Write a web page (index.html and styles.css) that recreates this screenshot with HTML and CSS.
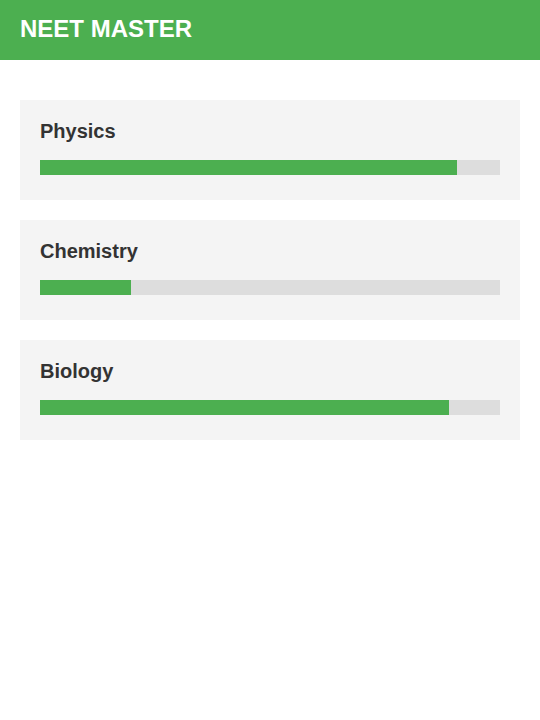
FILE: index.html
```html
<!DOCTYPE html>
<html>
<head>
<meta charset="utf-8">
<link rel="stylesheet" href="styles.css">
</head>
<body>
<header class="app-header">NEET MASTER</header>
<main class="subjects">
  <section class="card">
    <h2 class="card-title">Physics</h2>
    <div class="track"><div class="fill" style="width: 90.7%"></div></div>
  </section>
  <section class="card">
    <h2 class="card-title">Chemistry</h2>
    <div class="track"><div class="fill" style="width: 19.7%"></div></div>
  </section>
  <section class="card">
    <h2 class="card-title">Biology</h2>
    <div class="track"><div class="fill" style="width: 89%"></div></div>
  </section>
</main>
</body>
</html>
```
FILE: styles.css
```css
* { box-sizing: border-box; }
html, body {
  margin: 0;
  padding: 0;
  background: #ffffff;
  font-family: "Liberation Sans", Arial, sans-serif;
}
.app-header {
  height: 60px;
  padding: 15px 20px 0;
  background: #4caf50;
  color: #ffffff;
  font-size: 24px;
  font-weight: bold;
}
.subjects {
  display: flex;
  flex-direction: column;
  gap: 20px;
  padding: 40px 20px;
}
.card {
  height: 100px;
  padding: 20px;
  background: #f4f4f4;
}
.card-title {
  margin: 0 0 17px;
  font-size: 20px;
  line-height: 23px;
  font-weight: bold;
  color: #333333;
}
.track {
  height: 15px;
  background: #dddddd;
}
.fill {
  height: 100%;
  background: #4caf50;
}
```
